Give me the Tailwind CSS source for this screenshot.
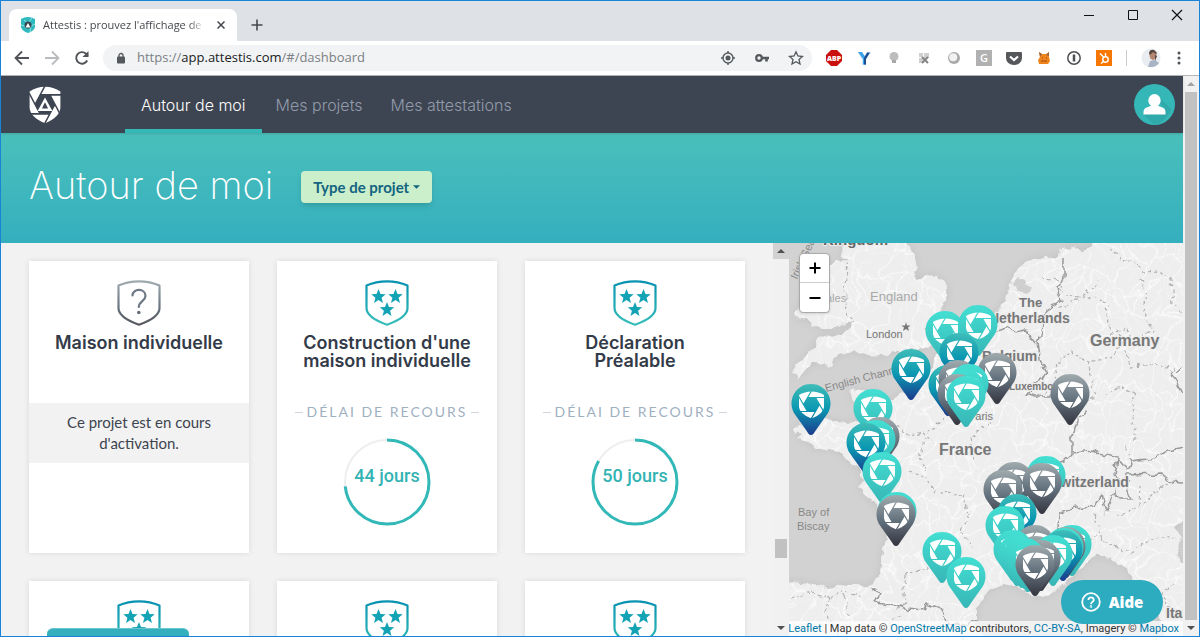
<!DOCTYPE html>
<html lang="fr">
<head>
  <meta charset="UTF-8" />
  <meta name="viewport" content="width=device-width, initial-scale=1.0"/>
  <title>Attestis : prouvez l'affichage de votre permis</title>
  <script src="https://cdn.jsdelivr.net/npm/@tailwindcss/browser@4"></script>
</head>
<body class="h-screen overflow-hidden flex flex-col border border-[#1883d7] bg-[#f2f2f2] font-['Lato',sans-serif] text-[#3d4450]">

  <!-- Shared symbols -->
  <svg class="absolute w-0 h-0" aria-hidden="true">
    <defs>
      <linearGradient id="teal" x1="0" y1="0" x2="0" y2="1"><stop offset="0" stop-color="#43dfd3"/><stop offset="1" stop-color="#37b6b6"/></linearGradient>
      <linearGradient id="blue" x1="0" y1="0" x2="0" y2="1"><stop offset="0" stop-color="#3fbdb8"/><stop offset=".5" stop-color="#0a97b1"/><stop offset="1" stop-color="#1c3a8c"/></linearGradient>
      <linearGradient id="gray" x1="0" y1="0" x2="0" y2="1"><stop offset="0" stop-color="#a0abae"/><stop offset=".5" stop-color="#64727e"/><stop offset="1" stop-color="#34353f"/></linearGradient>
      <linearGradient id="shieldBlue" x1="0" y1="0" x2="0" y2="1"><stop offset="0" stop-color="#0692b0"/><stop offset="1" stop-color="#36bdb9"/></linearGradient>
      <linearGradient id="shieldGray" x1="0" y1="0" x2="0" y2="1"><stop offset="0" stop-color="#9fabaf"/><stop offset=".6" stop-color="#677480"/><stop offset="1" stop-color="#55565e"/></linearGradient>

      <mask id="blades" maskUnits="userSpaceOnUse" x="0" y="0" width="26" height="28">
        <path d="M0.5 4Q6 0.5 13 0.5T25.500 4V16Q25 23 13 27.500Q1 23 0.500 16Z" fill="#fff"/>
        <path d="M9 6.500H17L21 13.500 17 20.500H9L5 13.500Z" fill="#000"/>
        <path d="M9 6.500H26M17 6.500L26 22M21 13.500L12 29M17 20.500H0M9 20.500L0 5M5 13.500L13.500 -1" stroke="#000" stroke-width="1.200"/>
      </mask>
      <symbol id="aperture" viewBox="0 0 26 28"><rect width="26" height="28" fill="#fff" mask="url(#blades)"/></symbol>

      <symbol id="stars" viewBox="0 0 44 46">
        <path d="M1.500 5.500Q11 1.300 22 1.300T42.500 5.500V28C42.500 35.500 34 40.500 22 44.700C10 40.500 1.500 35.500 1.500 28Z" fill="none" stroke="url(#shieldBlue)" stroke-width="2.200" stroke-linejoin="round"/>
        <g fill="#14a3b5">
          <path id="star" d="M13.500 9l2 5 5.200.3-4.100 3.400 1.400 5.200-4.500-2.900-4.500 2.900 1.400-5.200-4.100-3.400 5.200-.3z"/>
          <use href="#star" x="17"/><use href="#star" x="8.500" y="13"/>
        </g>
      </symbol>

      <g id="pin-teal"><path d="M0 52C-2 52-3 50-5 47L-17 30A19.500 19.500 0 1 1 17 30L5 47C3 50 2 52 0 52Z" fill="url(#teal)"/><use href="#aperture" x="-12.500" y="8" width="26" height="28"/></g>
      <g id="pin-blue"><path d="M0 52C-2 52-3 50-5 47L-17 30A19.500 19.500 0 1 1 17 30L5 47C3 50 2 52 0 52Z" fill="url(#blue)"/><use href="#aperture" x="-12.500" y="8" width="26" height="28"/></g>
      <g id="pin-gray"><path d="M0 52C-2 52-3 50-5 47L-17 30A19.500 19.500 0 1 1 17 30L5 47C3 50 2 52 0 52Z" fill="url(#gray)"/><use href="#aperture" x="-12.500" y="8" width="26" height="28"/></g>
    </defs>
  </svg>

  <!-- Tab strip -->
  <div class="h-10 shrink-0 flex bg-[#dee1e6] font-['Open_Sans',sans-serif]">
    <div class="mt-2 ml-2 w-57 h-8 bg-white rounded-t-lg flex items-center pl-3 pr-2 gap-2">
      <svg class="w-3.5 h-4 shrink-0" viewBox="0 0 14 16"><path d="M0 2Q7-2 14 2V10Q13 14 7 16Q1 14 0 10Z" fill="#2fb9bd"/><path d="M3 3L7 6 11 1M14 7L10 9 9 15M0 8L4 9" stroke="#8ee6e2" fill="none"/><circle cx="7" cy="8" r="3.500" fill="#36454f"/><path d="M7 6L9.500 10.500H4.500Z" fill="#fff"/></svg>
      <span class="flex-1 overflow-hidden whitespace-nowrap text-[11px] text-[#45494d] mask-r-from-90%">Attestis : prouvez l'affichage de v</span>
      <button aria-label="Fermer l'onglet" class="p-1"><svg class="w-2 h-2" viewBox="0 0 8 8"><path d="M.5.5l7 7M7.500.5l-7 7" stroke="#45494d" stroke-width="1.500"/></svg></button>
    </div>
    <button aria-label="Nouvel onglet" class="mt-2 ml-3.5"><svg class="w-3 h-3" viewBox="0 0 12 12"><path d="M6 .5v11M.5 6h11" stroke="#45494d" stroke-width="1.600"/></svg></button>
    <div class="ml-auto flex items-start gap-8 pt-2 pr-4">
      <button aria-label="Réduire"><svg class="w-3 h-3" viewBox="0 0 12 12"><path d="M1 6.500h10" stroke="#111"/></svg></button>
      <button aria-label="Agrandir"><svg class="w-3 h-3" viewBox="0 0 12 12"><path d="M1.500 1.500h9v9h-9z" fill="none" stroke="#111"/></svg></button>
      <button aria-label="Fermer"><svg class="w-3 h-3" viewBox="0 0 12 12"><path d="M1 1l10 10M11 1L1 11" stroke="#111" stroke-width="1.200"/></svg></button>
    </div>
  </div>

  <!-- Address bar -->
  <div class="h-[35px] shrink-0 flex items-center bg-white border-b border-[#b5b6b8] pl-3 pr-3 font-['Open_Sans',sans-serif]">
    <div class="flex items-center gap-3 text-[#505357]">
      <button aria-label="Précédent"><svg class="w-[18px] h-[18px]" viewBox="0 0 18 18"><path d="M16 9H3M9 2.500L2.500 9 9 15.500" fill="none" stroke="currentColor" stroke-width="1.800"/></svg></button>
      <button aria-label="Suivant" class="text-[#b9bbbd]"><svg class="w-[18px] h-[18px]" viewBox="0 0 18 18"><path d="M2 9H15M9 2.500L15.500 9 9 15.500" fill="none" stroke="currentColor" stroke-width="1.800"/></svg></button>
      <button aria-label="Actualiser"><svg class="w-[18px] h-[18px]" viewBox="0 0 18 18"><path d="M14.200 11.500A5.800 5.800 0 1 1 13 4.700L15 6.700" fill="none" stroke="currentColor" stroke-width="1.900"/><path d="M15.500 2v6h-6z" fill="currentColor"/></svg></button>
    </div>
    <div class="flex-1 ml-3 h-[26px] rounded-full bg-[#f1f3f4] flex items-center pl-3.5 pr-2 text-[#55585c]">
      <svg class="w-2 h-3 shrink-0" viewBox="0 0 8 12"><path d="M2 5V3.500a2 2 0 0 1 4 0V5" fill="none" stroke="currentColor" stroke-width="1.300"/><rect y="4.500" width="8" height="7" rx="1" fill="currentColor"/></svg>
      <p class="flex-1 ml-3 text-[13px] text-[#7c8084] whitespace-nowrap">https://<span class="text-[#202124]">app.attestis.com</span>/#/dashboard</p>
      <div class="flex items-center gap-[18px]">
        <svg class="w-4 h-4" viewBox="0 0 16 16"><circle cx="8" cy="8" r="5" fill="none" stroke="currentColor" stroke-width="1.400"/><circle cx="8" cy="8" r="2.500" fill="currentColor"/><path d="M8 1v2M8 13v2M1 8h2M13 8h2" stroke="currentColor" stroke-width="1.400"/></svg>
        <svg class="w-4 h-4" viewBox="0 0 16 16"><circle cx="5" cy="8" r="2.800" fill="none" stroke="currentColor" stroke-width="2.200"/><path d="M8 8h7M12.500 8v3.500" stroke="currentColor" stroke-width="2.600"/></svg>
        <svg class="w-4 h-4" viewBox="0 0 16 16"><path d="M8 1.800l1.900 4.200 4.500.5-3.400 3 1 4.500L8 11.700 4 14l1-4.500-3.400-3L6.100 6z" fill="none" stroke="currentColor" stroke-width="1.300"/></svg>
      </div>
    </div>
    <!-- Extensions -->
    <div class="flex items-center gap-[14px] ml-3.5 text-[#505357]">
      <svg class="w-4 h-4" viewBox="0 0 16 16"><path d="M5 0h6l5 5v6l-5 5H5l-5-5V5z" fill="#cb1010"/><text x="8" y="11" text-anchor="middle" font-size="7" font-weight="800" fill="#fff" font-family="Open Sans">ABP</text></svg>
      <svg class="w-4 h-4" viewBox="0 0 16 16"><path d="M1.500 2h4L8 6l3.500-4h4L10 9.500V15H6V9.500z" fill="#dce6ee"/><path d="M2 2h4l4 6v6.500H7V9z" fill="#38a3ea"/><path d="M11 2.500h3L10 9v5.500H8V8z" fill="#1a4f97"/></svg>
      <svg class="w-4 h-4" viewBox="0 0 16 16"><circle cx="8" cy="6.500" r="4.500" fill="#bdbdbd"/><path d="M6 10h4v3H6z" fill="#a8a8a8"/></svg>
      <svg class="w-4 h-4" viewBox="0 0 16 16"><path d="M3 3h4v4H3zM8 3h5v5H8zM3 8h4v5H3z" fill="#cfcfcf"/><path d="M6 7l6 6M12 7l-6 6" stroke="#858585" stroke-width="2"/></svg>
      <svg class="w-4 h-4" viewBox="0 0 16 16"><circle cx="8" cy="8" r="6" fill="#a9a9a9"/><circle cx="7.200" cy="7.200" r="4" fill="#f2f2f2"/></svg>
      <svg class="w-4 h-4" viewBox="0 0 16 16"><path d="M0 0h16v16H0z" fill="#b1b1b1"/><text x="8" y="12" text-anchor="middle" font-size="11" font-weight="600" fill="#fff" font-family="Open Sans">G</text></svg>
      <svg class="w-4 h-4" viewBox="0 0 16 16"><path d="M1 2h14q1 0 1 1v5a8 7 0 0 1-16 0V3q0-1 1-1z" fill="#56575b"/><path d="M4 6.500l4 3.500 4-3.500" fill="none" stroke="#fff" stroke-width="2.200"/></svg>
      <svg class="w-4 h-4" viewBox="0 0 16 16"><path d="M3 2l3 2h4l3-2v5l1 4-2 3H3l-1-4 2-3z" fill="#f0841c"/><path d="M3 2l3 2-2 3zM13 2l-3 3 3 1z" fill="#9b6238"/><path d="M6 8h1M10 8h1M5 11h6" stroke="#9b4b16"/></svg>
      <svg class="w-4 h-4" viewBox="0 0 16 16"><circle cx="8" cy="8" r="6.200" fill="none" stroke="#4d4f53" stroke-width="1.500"/><path d="M8 4.500v7" stroke="#4d4f53" stroke-width="2.500"/></svg>
      <svg class="w-4 h-4" viewBox="0 0 16 16"><path d="M0 0h16v16H0z" fill="#f87602"/><circle cx="9.500" cy="9.500" r="2.700" fill="none" stroke="#fff" stroke-width="1.500"/><path d="M4 3.500l4 4M9.500 6.500V3M7.500 11.500l-2.500 2" stroke="#fff" stroke-width="1.400"/></svg>
      <span class="w-px h-4 bg-[#c9cbce]"></span>
      <svg class="w-5 h-5" viewBox="0 0 20 20"><circle cx="10" cy="10" r="9.500" fill="#e9edf2"/><path d="M7 19l2-6 5-1 4 3a9.500 9.500 0 0 1-9 4z" fill="#a8b4c4"/><ellipse cx="12" cy="7" rx="3.500" ry="5" fill="#b58772"/><path d="M8 5q1-4 5-3l3 3-1 1-3-2-3 3zM14 7l2 1-2 5z" fill="#57463f"/></svg>
      <button aria-label="Menu" class="-ml-1"><svg class="w-4 h-4" viewBox="0 0 16 16" fill="#505357"><circle cx="8" cy="3" r="1.500"/><circle cx="8" cy="8" r="1.500"/><circle cx="8" cy="13" r="1.500"/></svg></button>
    </div>
  </div>

  <!-- Page -->
  <div class="flex-1 min-h-0 flex relative">
    <div class="flex-1 min-w-0 flex flex-col">

      <!-- Navigation Bar -->
      <nav class="h-[57px] shrink-0 bg-[#3e4552] flex items-stretch pl-7 pr-2 relative z-10 shadow-sm font-['Inter',sans-serif] font-light text-[16px] text-[#929bab]">
        <a href="#" aria-label="Attestis" class="self-center">
          <svg class="w-8 h-[38px]" viewBox="0 0 26 28" preserveAspectRatio="none">
            <use href="#aperture" width="26" height="28"/>
            <path d="M13 8.500L19 18.500H7Z" fill="#fff"/><path d="M13 12L15.500 16.500H10.500Z" fill="#3e4552"/>
          </svg>
        </a>
        <a href="#" class="ml-16 px-4 pt-1 flex items-center border-b-4 border-[#35b9b8] text-white">Autour de moi</a>
        <a href="#" class="px-3.5 pt-1 flex items-center border-b-4 border-transparent">Mes projets</a>
        <a href="#" class="px-3.5 pt-1 flex items-center border-b-4 border-transparent">Mes attestations</a>
        <button aria-label="Mon compte" class="ml-auto self-center">
          <svg class="w-[41px] h-[41px]" viewBox="0 0 41 41"><circle cx="20.500" cy="20.500" r="20.500" fill="#35b7b7"/><path d="M26 14L37 25Q32 38 20 41L9 30H31V24L24 18Z" fill="#30a9ab"/><ellipse cx="20.500" cy="16.500" rx="6.200" ry="6.500" fill="#fff"/><path d="M9.500 30.500V28Q9.500 24 14 23L17.500 21.500H23.500L27 23Q31.500 24 31.500 28V30.500Z" fill="#fff"/></svg>
        </button>
      </nav>

      <!-- Title -->
      <header class="h-[110px] shrink-0 bg-linear-to-b from-[#4abfbb] to-[#34afbe] flex items-start gap-7 px-7 pt-[38px]">
        <h1 class="font-['Inter',sans-serif] font-extralight text-[38px] leading-7 text-white whitespace-nowrap">Autour de moi</h1>
        <button class="h-8 px-3 rounded-sm bg-[#cbeecb] text-[#126480] font-bold text-[15px] leading-8 shadow-md flex items-center gap-1">Type de projet
          <svg class="w-[7px] h-1" viewBox="0 0 8 4"><path d="M0 0h8L4 4z" fill="#126480"/></svg>
        </button>
      </header>

      <div class="flex-1 min-h-0 flex">

        <!-- Projects -->
        <main class="w-2/3 flex relative overflow-hidden">
          <div class="flex-1 grid grid-cols-3 gap-x-7 gap-y-7 content-start px-7 pt-[18px] text-center">
            <article class="h-[292px] bg-white shadow-[0_0_6px_rgba(0,0,0,0.1)] flex flex-col items-center">
              <svg class="w-11 h-[46px] mt-[19px] shrink-0" viewBox="0 0 44 46"><path d="M1.500 5.500Q11 1.300 22 1.300T42.500 5.500V28C42.500 35.500 34 40.500 22 44.700C10 40.500 1.500 35.500 1.500 28Z" fill="none" stroke="url(#shieldGray)" stroke-width="2.200" stroke-linejoin="round"/><path d="M15.500 15.500C15.500 8 28.500 8 28.500 16C28.500 21 21.800 21.500 21.800 27" fill="none" stroke="#6c7883" stroke-width="2.200" stroke-linecap="round"/><circle cx="21.800" cy="32.500" r="1.800" fill="#646c77"/></svg>
              <h2 class="mt-2 font-['Inter',sans-serif] font-semibold text-[18px] leading-[18px] text-[#333b49]">Maison individuelle</h2>
              <p class="mt-[51px] w-full bg-[#f2f2f2] px-7 py-[9px] text-[15px] leading-[21px]">Ce projet est en cours d'activation.</p>
            </article>
            <article class="h-[292px] bg-white shadow-[0_0_6px_rgba(0,0,0,0.1)] flex flex-col items-center">
              <svg class="w-11 h-[46px] mt-[19px] shrink-0"><use href="#stars"/></svg>
              <h2 class="mt-2 px-4 font-['Inter',sans-serif] font-semibold text-[18px] leading-[18px] text-[#333b49]">Construction d'une maison individuelle</h2>
              <p class="mt-8 flex items-center gap-1 text-[14px] leading-5 tracking-[2px] text-[#9fb0bf] uppercase whitespace-nowrap before:w-2 before:h-px before:bg-[#cfd5da] after:w-2 after:h-px after:bg-[#cfd5da]">Délai de recours</p>
              <div class="relative mt-4">
                <svg class="w-[88px] h-[88px] -rotate-90" viewBox="0 0 88 88" fill="none"><circle cx="44" cy="44" r="42" stroke="#eee" stroke-width="2"/><circle cx="44" cy="44" r="42" stroke="#33b8b8" stroke-width="3" pathLength="60" stroke-dasharray="44 60"/></svg>
                <span class="absolute inset-x-0 top-7 font-['Roboto',sans-serif] font-medium text-[18px] leading-5 text-[#33b3b3]">44 jours</span>
              </div>
            </article>
            <article class="h-[292px] bg-white shadow-[0_0_6px_rgba(0,0,0,0.1)] flex flex-col items-center">
              <svg class="w-11 h-[46px] mt-[19px] shrink-0"><use href="#stars"/></svg>
              <h2 class="mt-2 px-12 font-['Inter',sans-serif] font-semibold text-[18px] leading-[18px] text-[#333b49]">Déclaration Préalable</h2>
              <p class="mt-8 flex items-center gap-1 text-[14px] leading-5 tracking-[2px] text-[#9fb0bf] uppercase whitespace-nowrap before:w-2 before:h-px before:bg-[#cfd5da] after:w-2 after:h-px after:bg-[#cfd5da]">Délai de recours</p>
              <div class="relative mt-4">
                <svg class="w-[88px] h-[88px] -rotate-90" viewBox="0 0 88 88" fill="none"><circle cx="44" cy="44" r="42" stroke="#eee" stroke-width="2"/><circle cx="44" cy="44" r="42" stroke="#33b8b8" stroke-width="3" pathLength="60" stroke-dasharray="50 60"/></svg>
                <span class="absolute inset-x-0 top-7 font-['Roboto',sans-serif] font-medium text-[18px] leading-5 text-[#33b3b3]">50 jours</span>
              </div>
            </article>
            <article class="h-[292px] bg-white shadow-[0_0_6px_rgba(0,0,0,0.1)] flex flex-col items-center"><svg class="w-11 h-[46px] mt-[19px]"><use href="#stars"/></svg></article>
            <article class="h-[292px] bg-white shadow-[0_0_6px_rgba(0,0,0,0.1)] flex flex-col items-center"><svg class="w-11 h-[46px] mt-[19px]"><use href="#stars"/></svg></article>
            <article class="h-[292px] bg-white shadow-[0_0_6px_rgba(0,0,0,0.1)] flex flex-col items-center"><svg class="w-11 h-[46px] mt-[19px]"><use href="#stars"/></svg></article>
          </div>
          <span class="absolute left-[46px] bottom-0 w-[142px] h-2 rounded-t-md bg-[#34afbe] border-t border-[#6cc6cf]"></span>

          <!-- Projects scrollbar -->
          <div class="w-4 shrink-0 bg-[#f1f1f1] flex flex-col items-center justify-between">
            <span class="w-full h-4 bg-[#d2d2d2] flex items-center justify-center"><svg class="w-2 h-1" viewBox="0 0 8 4"><path d="M4 0l4 4H0z" fill="#505050"/></svg></span>
            <span class="mt-auto mb-[62px] w-3 h-[19px] bg-[#c1c1c1]"></span>
            <span class="w-full h-4 flex items-center justify-center"><svg class="w-2 h-1" viewBox="0 0 8 4"><path d="M0 0h8L4 4z" fill="#505050"/></svg></span>
          </div>
        </main>

        <!-- Map -->
        <section class="w-1/3 relative overflow-hidden bg-[#d0d0d0]">
          <svg class="absolute inset-0 w-full h-full" viewBox="0 0 394 393" preserveAspectRatio="xMidYMid slice" font-family="Liberation Sans, sans-serif">
            <defs>
              <path id="england" d="M57-2L53 7 55 15 60 17 48 18 36 24 30 35 24 50 14 60 6 69 9 77 19 77 25 82 33 86 44 86 58 80 64 79 59 87 51 93 38 92 28 97 23 107 16 114 2 129 6 130 9 136 17 126 24 120 36 121 40 123 44 114 56 110 64 108 78 113 93 112 95 115 104 108 128 108 141 103 148 95 150 88 142 88 133 86 143 80 148 73 157 57 158 44 148 32 136 31 128 37 123 32 128 27 126 14 121 4 116-2Z"/>
              <path id="continent" d="M400-2H306L294 9 291 4 272 7 271 13 246 15 232 22 228 30 223 34 219 50 211 64 196 80 186 90 164 102 146 112 143 126 134 136 128 144 118 148 106 154 104 158 96 157 88 148 81 150 62 146 60 148 64 157 70 166 74 177 60 180 47 179 37 175 24 177 13 181 4 185 5 189 13 191 8 195 18 199 23 202 27 207 40 205 48 209 56 214 63 221 71 227 74 236 71 244 78 254 88 264 94 277 98 297 94 304 92 321 91 331 84 340 78 344 68 342 54 342 41 346 24 341 1 339-5 336V400H220L196 396 187 382 187 366 196 350 213 341 226 343 239 351 253 354 266 349 279 337 293 324 306 312 323 317 339 326 343 337 350 350 356 361 369 374 377 394 400 400V322L393 321 388 307 392 294 386 283 394 278 400 278Z"/>
              <clipPath id="land"><use href="#england"/><use href="#continent"/></clipPath>
              <pattern id="roads" width="88" height="74" patternUnits="userSpaceOnUse" patternTransform="rotate(13) scale(.7)">
                <path d="M0 12L11 15 19 9 33 18 45 14 57 23 66 18 77 20 88 12M0 50L13 44 24 51 39 41 50 48 62 43 72 52 88 50M22 0L19 9 26 25 21 38 24 51 31 63 22 74M62 0L57 23 63 33 62 43 55 60 62 74M33 18L39 41M77 20L72 52" fill="none" stroke="#fff" stroke-width="1.300"/>
                <path d="M0 12L9 29 13 44 11 60 0 74M39 41L45 28 57 23M72 52L78 65 88 74M11 15L21 38 39 41 31 63 55 60 50 48 45 14M66 18L62 43 78 65M5 0L11 15 26 25 33 18 45 0M13 44L31 63M77 20L88 31M0 31L9 29M79 0L77 20" fill="none" stroke="#f9f9f9" stroke-width=".7"/>
              </pattern>
              <filter id="blur" x="-10%" y="-10%" width="120%" height="120%"><feGaussianBlur stdDeviation="5"/></filter>
              <filter id="rough" filterUnits="userSpaceOnUse" x="-10" y="-10" width="414" height="413"><feTurbulence type="fractalNoise" baseFrequency=".11" numOctaves="2" seed="4"/><feDisplacementMap in="SourceGraphic" scale="9" xChannelSelector="R" yChannelSelector="G"/></filter>
              <filter id="bend" filterUnits="userSpaceOnUse" x="-20" y="-20" width="434" height="433"><feTurbulence type="fractalNoise" baseFrequency=".022" numOctaves="3" seed="8"/><feDisplacementMap in="SourceGraphic" scale="45" xChannelSelector="R" yChannelSelector="G"/></filter>
            </defs>
            <rect width="394" height="393" fill="#d2d2d2"/>
            <g fill="#c2c2c2" filter="url(#blur)"><use href="#england"/><use href="#continent"/></g>
            <g fill="#eee" filter="url(#rough)"><use href="#england"/><use href="#continent"/></g>
            <g clip-path="url(#land)"><rect x="-20" y="-20" width="434" height="433" fill="url(#roads)" filter="url(#bend)"/></g>
            <path d="M221 36l4 3 4-5 8 4 4 8-5 6-7-2-2-7z" fill="#cfcfcf" filter="url(#rough)"/>

            <!-- Borders -->
            <g filter="url(#rough)" fill="none">
              <g stroke="#b3b3b3" stroke-width="1.300" stroke-dasharray="3 3">
                <path d="M57 19l3 15-6 15 6 14-4 8 8 8M322 4l8 12 14 3 10 10 18-1 10 8 2 25 10 8M352 37l5 14-3 17 11 20-20 7-8-9-14 4-4-9-2-20-12-7-16 3-20 8M329 88l5 13-13 14-22 4-17-11-14 13-4 22-14 9M334 101l8 23 24-2 25 5M299 119l7 33-13 12M316 152l14-8 15 7-1 33 2 14M253 34l20 4-2 10 22 7 17-18"/>
                <path d="M108 183l12 10 14-3 10 9M140 190l16-18 2-17M119 228l18 6 11 17 27 1 6 20-10 15 13 17M115 331l20-4 15-10M116 331l0 29-10 9M138 228l-9-14 8-19M185 215l-3-22 20-13M1 355l23-6 16 6 16-7 19 8M40 355l-4 14 10 16 6 10M56 352l3 20M305 271l8 27 30 12 21-17 27 3M350 242l-1 22-20 8M342 218l-4-18M308 292l-12 18M353 261l22-19 16-3M383 340l-10 13 12 20M92 390l20-18"/>
              </g>
              <g stroke="#999" stroke-width="1.500">
                <path d="M275 15l0 20-7 9 3 14-15 10-2 20-6 9 2 20 7 13M200 89l18-5 9 5 10-2 9 13M257 129l-4 8-8 3-1 8-9 2M237 150l9 3 18 0M283 194l6-17 8-11M382 127l5 12 6 13M392 125l-4 4"/>
                <path d="M283 193l0 18-8 7-22 5M284 210l20-2 24 6 10 12 4-8 25-3 12-7 15-3M329 214l-3 18 11 6 6 18-14 0-3-9-8 22-5-16-9 10-17 2-18 6-1 13 16 5M337 232l35-1 10 8 12 1"/>
                <path d="M82 344l9 7-4 8 20 3 12 4 16 2 2-8 15 6 9 15 10 2 18-6"/>
              </g>
            </g>

            <g fill="#777" stroke="#ededed" stroke-width="2" stroke-linejoin="round" paint-order="stroke">
              <text x="34" y="2" font-size="15" font-weight="700" fill="#666">Kingdom</text>
              <text x="81" y="58" font-size="13" fill="#aaa" stroke-width="1">England</text>
              <text x="27" y="59" font-size="11" fill="#aaa" stroke-width="1">Wales</text>
              <text x="77" y="95" font-size="11">London</text>
              <path d="M117 79l1 3.500h3.500l-2.500 2 1 3.500-3-2-3 2 1-3.500-2.500-2h3.500z" stroke="none"/>
              <text x="230" y="64" font-size="13" font-weight="700">The</text>
              <text x="200" y="80" font-size="14" font-weight="700">Netherlands</text>
              <text x="301" y="103" font-size="16" font-weight="700">Germany</text>
              <text x="193" y="118" font-size="14" font-weight="700">Belgium</text>
              <text x="220" y="147" font-size="10" font-weight="700">Luxembourg</text>
              <text x="179" y="177" font-size="11">Paris</text>
              <text x="150" y="212" font-size="16" font-weight="700">France</text>
              <text x="262" y="244" font-size="14" font-weight="700">Switzerland</text>
              <text x="377" y="375" font-size="14" font-weight="700">Italy</text>
            </g>
            <g fill="#888" font-size="11">
              <text x="9" y="273">Bay of</text><text x="8" y="287">Biscay</text>
              <text transform="translate(37 149) rotate(-15)">English Channel</text>
              <text transform="translate(8 37) rotate(-65)">Irish Sea</text>
            </g>

            <!-- Project pins, north to south -->
            <use href="#pin-teal" x="156" y="67"/><use href="#pin-teal" x="189" y="61"/>
            <use href="#pin-blue" x="170" y="89"/><use href="#pin-blue" x="122" y="105"/>
            <use href="#pin-gray" x="208" y="109"/><use href="#pin-gray" x="281" y="130"/>
            <use href="#pin-blue" x="22" y="140"/><use href="#pin-teal" x="84" y="145"/>
            <use href="#pin-blue" x="159" y="121"/><use href="#pin-gray" x="169" y="116"/><use href="#pin-teal" x="180" y="120"/><use href="#pin-teal" x="176" y="125"/><use href="#pin-gray" x="168" y="130"/><use href="#pin-teal" x="177" y="132"/>
            <use href="#pin-gray" x="91" y="173"/><use href="#pin-teal" x="87" y="176"/><use href="#pin-blue" x="77" y="179"/>
            <use href="#pin-teal" x="93" y="208"/><use href="#pin-teal" x="108" y="248"/><use href="#pin-gray" x="107" y="251"/>
            <use href="#pin-teal" x="257" y="212"/><use href="#pin-gray" x="225" y="218"/><use href="#pin-gray" x="214" y="226"/><use href="#pin-gray" x="253" y="219"/>
            <use href="#pin-blue" x="228" y="250"/><use href="#pin-teal" x="216" y="262"/>
            <use href="#pin-gray" x="246" y="281"/><use href="#pin-teal" x="283" y="281"/><use href="#pin-gray" x="277" y="283"/><use href="#pin-teal" x="275" y="284"/><use href="#pin-blue" x="274" y="286"/>
            <use href="#pin-teal" x="224" y="286"/><use href="#pin-teal" x="153" y="288"/><use href="#pin-teal" x="228" y="291"/><use href="#pin-teal" x="233" y="293"/><use href="#pin-gray" x="247" y="292"/><use href="#pin-teal" x="264" y="291"/><use href="#pin-gray" x="252" y="296"/><use href="#pin-teal" x="236" y="294"/><use href="#pin-teal" x="239" y="297"/><use href="#pin-gray" x="246" y="301"/>
            <use href="#pin-teal" x="177" y="313"/>
          </svg>

          <div class="absolute left-2.5 top-2.5 w-[31px] rounded-sm border border-[#aaa] bg-white flex flex-col text-black shadow-sm">
            <button aria-label="Zoom avant" class="h-[29px] flex items-center justify-center border-b border-[#ccc]"><svg class="w-3 h-3" viewBox="0 0 12 12"><path d="M6 .5v11M.5 6h11" stroke="currentColor" stroke-width="2"/></svg></button>
            <button aria-label="Zoom arrière" class="h-[29px] flex items-center justify-center"><svg class="w-3 h-3" viewBox="0 0 12 12"><path d="M.5 6h11" stroke="currentColor" stroke-width="2"/></svg></button>
          </div>
          <p class="absolute right-0 bottom-0 px-1 bg-white/70 font-['Roboto',sans-serif] text-[11px] leading-[15px] whitespace-nowrap text-[#333]"><a href="#" class="text-[#0078a8]">Leaflet</a> | Map data © <a href="#" class="text-[#0078a8]">OpenStreetMap</a> contributors, <a href="#" class="text-[#0078a8]">CC-BY-SA</a>, Imagery © <a href="#" class="text-[#0078a8]">Mapbox</a></p>
        </section>
      </div>
    </div>

    <!-- Page scrollbar -->
    <div class="w-4 shrink-0 bg-[#f1f1f1] flex flex-col items-center">
      <span class="h-4 flex items-center"><svg class="w-2 h-1" viewBox="0 0 8 4"><path d="M4 0l4 4H0z" fill="#a3a3a3"/></svg></span>
      <span class="flex-1 w-3 bg-[#c1c1c1]"></span>
      <span class="h-4 flex items-center"><svg class="w-2 h-1" viewBox="0 0 8 4"><path d="M0 0h8L4 4z" fill="#505050"/></svg></span>
    </div>

    <!-- Help -->
    <button class="absolute right-9 bottom-3 z-20 h-11 w-[102px] rounded-full bg-[#2dabbf] text-white flex items-center justify-center gap-2 font-['Open_Sans',sans-serif] font-extrabold text-[15px]">
      <svg class="w-5 h-5" viewBox="0 0 20 20" fill="none" stroke="#fff" stroke-width="1.800"><circle cx="10" cy="10" r="8.800"/><path d="M7.400 8C7.400 4.500 12.700 4.600 12.700 7.900C12.700 10 10 9.800 10 12.200"/><circle cx="10" cy="14.500" r=".4"/></svg>
      Aide
    </button>
  </div>
</body>
</html>
